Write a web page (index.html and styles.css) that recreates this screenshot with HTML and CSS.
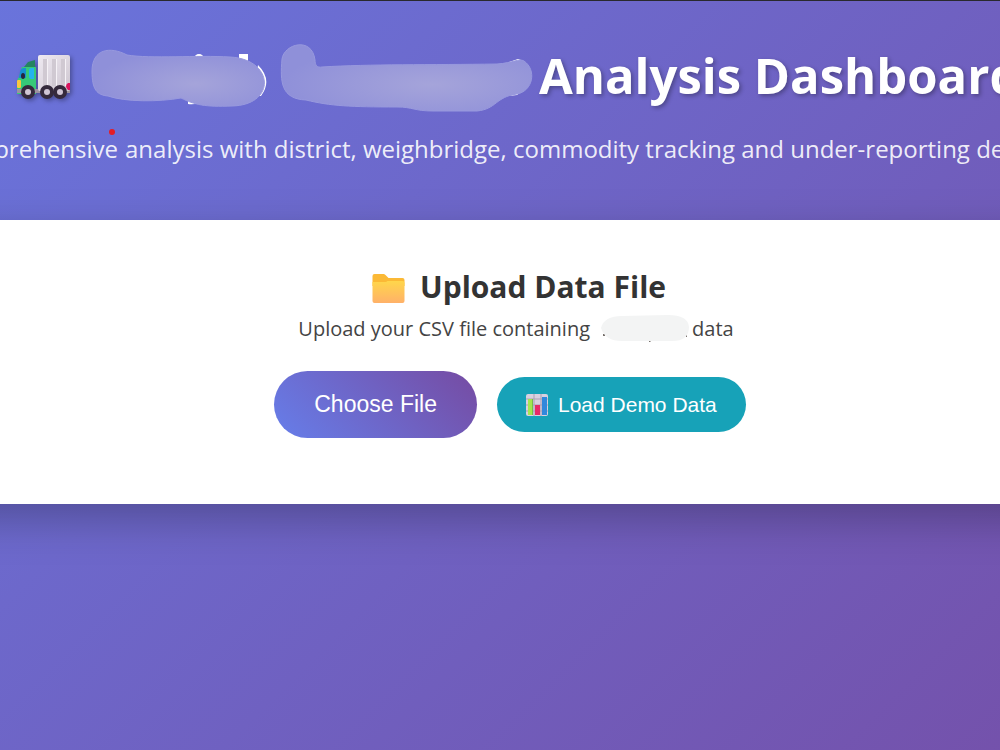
FILE: index.html
```html
<!DOCTYPE html>
<html lang="en">
<head>
	<meta charset="utf-8">
	<meta name="viewport" content="width=device-width">
	<title>Analysis Dashboard</title>
	<link rel="stylesheet" href="styles.css">
</head>
<body>
	<header class="header">
		<h1 class="title">
			<svg class="truck" viewBox="0 0 56 48" aria-hidden="true">
				<defs>
					<linearGradient id="box" x2="1" y2="1">
						<stop offset="0" stop-color="#efeaf2"/>
						<stop offset="1" stop-color="#cec6d0"/>
					</linearGradient>
				</defs>
				<path d="M8 12 12 7l7-2v8H8z" fill="#258461"/>
				<path d="M6 12h14v27H1V27q0-3 2-5z" fill="#36c978"/>
				<path d="M4 17q1-4 4-4h2v10H3z" fill="#168fd0"/>
				<path d="M13 15q0-2 3-2h2v11h-3q-2 0-2-3z" fill="#24b3ee"/>
				<ellipse cx="7" cy="21" rx="2" ry="3" fill="#26243d"/>
				<rect x="1" y="25" width="4" height="8" rx="1" fill="#f9c83e"/>
				<path d="M1 34h53v4H1z" fill="#9b929f"/>
				<rect x="22" y="0" width="32" height="36" rx="2" fill="url(#box)"/>
				<path d="M27 4h4v27h-4zm9 0h4v27h-4zm9 0h4v27h-4z" fill="#d0c9d2"/>
				<path d="M31 4h1v27h-1zm9 0h1v27h-1zm9 0h1v27h-1z" fill="#f5f1f6"/>
				<path d="M54 28v7h-2q-4-4 0-7z" fill="#d9145e"/>
				<g fill="#352a3c">
					<circle cx="12" cy="37" r="7"/>
					<circle cx="31" cy="37" r="7"/>
					<circle cx="44" cy="37" r="7"/>
				</g>
				<g fill="#d0c5d5">
					<circle cx="12" cy="37" r="3"/>
					<circle cx="31" cy="37" r="3"/>
					<circle cx="44" cy="37" r="3"/>
				</g>
			</svg>
			<svg class="masks" viewBox="0 0 450 76" aria-hidden="true">
				<defs>
					<radialGradient id="mist" cx=".6" cy=".6" r=".6">
						<stop offset="0" stop-color="#a5a4da"/>
						<stop offset="1" stop-color="#8f90d9"/>
					</radialGradient>
				</defs>
				<g fill="#fff">
					<circle cx="108" cy="22" r="5"/>
					<path d="M148 17h9v8h-9zM97 61h11v5q-6 2-11 1zM167 28q15 15 3 31h-8zM418 25l9-3 3 1v5zM418 59l8-1 4-3z"/>
				</g>
				<path d="M1 34C1 12 19 9 36 18c24 4 70 0 103 2 44 2 47 48 2 49-27 1-37-1-51-8-22 4-56 4-73-2C6 58 1 53 1 34z" fill="url(#mist)" stroke="#9899de"/>
				<path d="M191 22c2-15 30-23 33 1 0 5 2 8 7 7 48-3 108-2 175-3 16-1 22-6 27-3 13 9 9 30-7 33-22 3-20 15-40 17h-44c-19 0-20-4-36-4-46 0-67-1-91-7-25-1-26-18-24-41z" fill="url(#mist)" stroke="#9899de"/>
			</svg>
			<span>Analysis Dashboard</span>
		</h1>
		<p class="subtitle"><span class="marked">Comprehensive</span> analysis with district, weighbridge, commodity tracking and under-reporting detection</p>
	</header>

	<main class="card">
		<h2 class="heading">
			<svg class="folder" viewBox="0 0 32 30" aria-hidden="true">
				<defs>
					<linearGradient id="fold" x2="0" y2="1">
						<stop offset="0" stop-color="#ffd64b"/>
						<stop offset="1" stop-color="#ffb169"/>
					</linearGradient>
				</defs>
				<path d="M0 9V2q0-2 2-2h9q1 0 2 1l3 3h14q2 0 2 2v6H0z" fill="#fbb936"/>
				<path d="M0 8h13q1 0 2-1h15q2 0 2 2v18q0 2-2 2H2q-2 0-2-2z" fill="url(#fold)"/>
			</svg>
			<span>Upload Data File</span>
		</h2>
		<p class="hint">
			<span>Upload your CSV file containing</span>
			<svg class="hint-mask" viewBox="0 0 90 30" aria-hidden="true">
				<path d="M3 20h2v2H3zM49 26h3l-2 2h-1zM86 21h1v2h-1z" fill="#77706c"/>
				<path d="M1 14Q4 2 22 2l46-1q20 0 21 12 0 14-17 14H22Q5 27 1 14z" fill="#f3f4f4"/>
			</svg>
			<span>data</span>
		</p>
		<div class="actions">
			<button class="btn btn-choose" type="button">Choose File</button>
			<button class="btn btn-demo" type="button">
				<svg class="chart" viewBox="0 0 22 22" aria-hidden="true">
					<rect width="22" height="22" rx="2" fill="#d8d0df"/>
					<path d="M0 5h22M0 11h22M0 17h22M8 0v22M15 0v22" stroke="#aaa0b2" fill="none"/>
					<path d="M2 5h4v16H2z" fill="#a3e74f"/>
					<path d="M6 5h1v16H6z" fill="#75bf47"/>
					<path d="M9 11h5v10H9z" fill="#e82968"/>
					<path d="M16 3h5v18h-5z" fill="#3188dc"/>
				</svg>
				<span>Load Demo Data</span>
			</button>
		</div>
	</main>
</body>
</html>
```

FILE: styles.css
```css
*{
	box-sizing: border-box;
	margin: 0;
	padding: 0;
}

body{
	font-family: "Open Sans", "Noto Sans", sans-serif;
	min-height: 100vh;
	overflow-x: hidden;
	border-top: 1px solid #29292e;
	background: linear-gradient(135deg, #667eea -30%, #764ba2 120%) no-repeat;
}

/* Header */
.header{
	padding: 36px 0 52px 16px;
	color: #ffffff;
	white-space: nowrap;
	overflow: hidden;
}

.title{
	display: flex;
	align-items: center;
	font-size: 49px;
	line-height: 76px;
	text-shadow: 2px 2px 4px rgba(0, 0, 0, 0.3);
}

.title svg{
	flex: none;
}

.truck{
	width: 56px;
	height: 48px;
	margin-top: 8px;
	filter: drop-shadow(2px 2px 2px rgba(0, 0, 0, 0.3));
}

.masks{
	width: 450px;
	height: 76px;
	margin: 0 -2px 0 19px;
}

.subtitle{
	display: flex;
	justify-content: center;
	gap: 7px;
	font-size: 24px;
	line-height: 36px;
	margin-top: 18px;
	padding-left: 8px;
	color: rgba(255, 255, 255, 0.9);
}

.marked{
	position: relative;
}

/* red dot over the first word */
.marked::after{
	content: "";
	position: absolute;
	top: -2px;
	right: 3px;
	width: 6px;
	height: 6px;
	border-radius: 50%;
	background: #e51c24;
}

/* Upload card, runs past both sides of the window */
.card{
	display: flex;
	flex-direction: column;
	align-items: center;
	margin: 1px -60px 0;
	padding: 44px 0 66px 32px;
	background: #ffffff;
	color: #333333;
	box-shadow: 0 15px 40px rgba(0, 0, 0, 0.25);
}

.heading{
	display: flex;
	align-items: center;
	gap: 15px;
	font-size: 30px;
	line-height: 46px;
	margin-left: 6px;
}

.folder{
	width: 33px;
	height: 30px;
	margin-top: 3px;
}

.hint{
	display: flex;
	align-items: center;
	gap: 6px;
	font-size: 20px;
	line-height: 38px;
	color: #444444;
}

.hint-mask{
	width: 90px;
	height: 30px;
	margin: 0 -4px 0 4px;
}

.actions{
	display: flex;
	align-items: center;
	gap: 20px;
	margin: 23px 12px 0 0;
}

.btn{
	display: flex;
	align-items: center;
	gap: 10px;
	border: none;
	border-radius: 34px;
	color: #ffffff;
	font-family: "Liberation Sans", Arial, sans-serif;
	cursor: pointer;
}

.btn-choose{
	padding: 20px 40px;
	font-size: 23px;
	line-height: 27px;
	background: linear-gradient(45deg, #667eea, #764ba2);
}

.btn-demo{
	padding: 15px 29px;
	font-size: 21px;
	line-height: 25px;
	background: #17a2b8;
}

.chart{
	width: 22px;
	height: 22px;
}
```
